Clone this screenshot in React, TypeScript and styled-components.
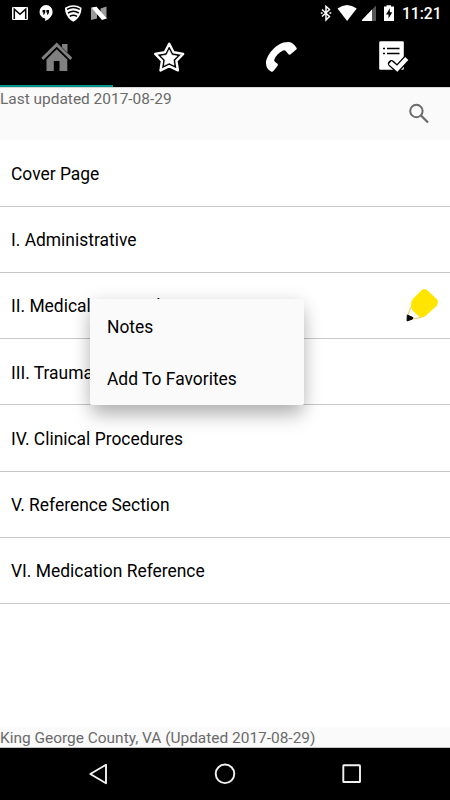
import React from "react";
import styled, { createGlobalStyle } from "styled-components";

const GlobalStyle = createGlobalStyle`
  *, *::before, *::after { box-sizing: border-box; }
  body { margin: 0; background: #fff; }
  svg { display: block; flex: none; }
`;

const Screen = styled.div`
  position: relative;
  display: flex;
  flex-direction: column;
  width: 450px;
  height: 800px;
  overflow: hidden;
  background: #fff;
  color: #000;
  font-family: Roboto, "Liberation Sans", sans-serif;
`;

const StatusBar = styled.header`
  display: flex;
  justify-content: space-between;
  flex: none;
  height: 27px;
  padding: 4px 9px 0 11px;
  background: #000;
  color: #fff;
`;

const StatusGroup = styled.div<{ $gap: number }>`
  display: flex;
  align-items: flex-start;
  gap: ${(p) => p.$gap}px;
`;

const Clock = styled.span`
  width: 39px;
  margin-top: 1px;
  margin-left: 2px;
  font-size: 15.6px;
  font-weight: 500;
  line-height: 19px;
  white-space: nowrap;
`;

const TabBar = styled.nav`
  display: grid;
  grid-template-columns: 113px 112px 112px 113px;
  flex: none;
  height: 60px;
  background: #000;
`;

const Tab = styled.button<{ $active?: boolean }>`
  display: flex;
  justify-content: center;
  padding: 13px 0 0;
  border: 0;
  border-bottom: 2px solid ${(p) => (p.$active ? "#009688" : "#000")};
  background: #000;
  color: ${(p) => (p.$active ? "#808080" : "#fff")};
`;

const InfoBar = styled.div`
  display: flex;
  justify-content: space-between;
  flex: none;
  height: 53px;
  padding-right: 20px;
  border-top: 1px solid #d8d8d8;
  background: #fafafa;
`;

const Caption = styled.span`
  font-size: 15.45px;
  line-height: 18px;
  color: #6a6a6a;
  white-space: nowrap;
`;

const InfoCaption = styled(Caption)`
  margin-top: 2px;
`;

const SearchButton = styled.button`
  align-self: flex-start;
  margin-top: 15px;
  padding: 0;
  border: 0;
  background: none;
  color: #6b6b6b;
`;

const List = styled.ul`
  flex: 1;
  margin: 0;
  padding: 0.7px 0 0;
  list-style: none;
`;

const Row = styled.li`
  display: flex;
  align-items: center;
  justify-content: space-between;
  height: 66.2px;
  padding: 2.4px 11px 0;
  border-bottom: 1px solid #c8c8c8;
  font-size: 17.43px;
  line-height: 21px;
  white-space: nowrap;
`;

const NoteMarker = styled.span`
  margin-bottom: 4px;
`;

const Footer = styled.footer`
  flex: none;
  height: 21px;
  padding-top: 1px;
  overflow: hidden;
  border-bottom: 1px solid #c4c4c4;
  background: #fafafa;
  line-height: 20px;
`;

const NavBar = styled.nav`
  display: grid;
  grid-template-columns: 162px 126px 162px;
  justify-items: center;
  flex: none;
  height: 52px;
  padding-top: 14px;
  background: #000;
  color: #f2f2f2;
`;

const NavBack = styled.span`
  margin-left: 34px;
`;

const NavRecent = styled.span`
  margin-right: 34px;
`;

const ContextMenu = styled.div`
  position: absolute;
  top: 299px;
  left: 90px;
  width: 214px;
  height: 105.5px;
  padding-top: 1.6px;
  border-radius: 2px;
  background: #fafafa;
  box-shadow: 0 12px 18px -2px rgba(0, 0, 0, 0.25), 0 2px 18px rgba(0, 0, 0, 0.12);
`;

const MenuItem = styled.div`
  height: 52px;
  padding-left: 17px;
  font-size: 17.43px;
  line-height: 53px;
`;

const GmailIcon = () => (
  <svg width="18" height="18" viewBox="11 4 18 18">
    <rect x="12" y="7" width="16" height="13" rx="1" fill="#fff" />
    <path d="M14.3 19V9.2L20 14.2L25.7 9.2V19" fill="none" stroke="#000" strokeWidth="1.5" />
  </svg>
);

const HangoutsIcon = () => (
  <svg width="18" height="18" viewBox="37 4 18 18">
    <path d="M46 5a6.8 6.8 0 0 0-.8 13.5V21c4-1.700 7.400-5 7.400-9.200A6.700 6.700 0 0 0 46 5Z" fill="#fff" />
    <path d="M42.600 10h2.600v2.500l-1 2H43l.6-2h-1zM46.400 10H49v2.500l-1 2h-1.200l.6-2h-1z" fill="#000" />
  </svg>
);

const ShieldIcon = () => (
  <svg width="18" height="18" viewBox="63 4 18 18">
    <path d="M64 7.700Q72.300 3 80.500 7.700C80.500 14.500 77 19 72.300 21.700C67.500 19 64 14.500 64 7.700Z" fill="#fff" />
    <g fill="none" stroke="#000" strokeWidth="1.500">
      <path d="M66 9.400Q72.300 5.700 78.800 9.400" />
      <path d="M67 13Q72.300 9.700 77.800 13" />
      <path d="M68.800 16.300Q72.300 14 76 16.300" />
    </g>
  </svg>
);

const NougatIcon = () => (
  <svg width="18" height="18" viewBox="90 4 18 18">
    <path d="M91 7.500L97 12V18.500L91 20ZM106.500 6.500V19L100.500 14V8.500Z" fill="#999" />
    <path d="M91.300 7.500L96.500 6.800L106.800 18.500L102 20Z" fill="#fff" />
  </svg>
);

const BluetoothIcon = () => (
  <svg width="12" height="18" viewBox="320 4 12 18">
    <path d="M322 9.500L329.500 16.500L326 20V6.500L329.500 9.500L322 16.500" fill="none" stroke="#fff" strokeWidth="1.500" />
    <path d="M320.800 12.200h1.800v1.600h-1.800zM329.500 12.200h1.800v1.600h-1.800z" fill="#fff" />
  </svg>
);

const WifiIcon = () => (
  <svg width="20" height="18" viewBox="338 4 20 18">
    <path d="M338.500 8.500Q348 1.500 357.700 8.500L348.100 21Z" fill="#fff" />
  </svg>
);

const SignalIcon = () => (
  <svg width="16" height="18" viewBox="361 4 16 18">
    <path d="M360 21L375 5.500V21Z" fill="#555" />
    <path d="M360 21L371 9.600V21Z" fill="#fff" />
  </svg>
);

const BatteryIcon = () => (
  <svg width="12" height="18" viewBox="383 4 12 18">
    <path d="M386.500 5.200h4.500v1.400h3V21h-10V6.600h2.500z" fill="#fff" />
    <path d="M389.800 8.200L386 14.500h2.500v4l3.800-6.300h-2.500z" fill="#000" />
  </svg>
);

const HomeIcon = () => (
  <svg width="34" height="34" viewBox="39.500 40 34 34" fill="currentColor">
    <path d="M56.200 42.600L61.500 47.700V44H67V53L71.800 57.800L69.800 60L56.200 46.800L42.800 60L40.800 57.800Z" />
    <path d="M56.200 49.200L66.800 59.500V71H59V61H53.300V71H46V59.500Z" />
    <path d="M61.300 47.500L67.300 53.300" stroke="#000" strokeWidth=".6" />
  </svg>
);

const StarIcon = () => (
  <svg width="34" height="34" viewBox="151.500 40 34 34" strokeLinejoin="round">
    <path d="M168.700 43.700L173.100 52.300L182.700 53.900L175.900 60.800L177.400 70.400L168.700 66.100L160 70.400L161.500 60.800L154.700 53.900L164.300 52.300Z" fill="#000" stroke="#fff" strokeWidth="2.400" />
    <path d="M168.700 49.800L171.300 55L176.700 56L172.800 59.900L173.600 65.300L168.700 62.900L163.800 65.300L164.600 59.900L160.700 56L166.100 55Z" fill="#fff" stroke="#fff" strokeWidth=".6" />
  </svg>
);

const PhoneIcon = () => (
  <svg width="34" height="34" viewBox="264 40 34 34">
    <path d="M266 63C266 56 276 42 288 42Q290.500 42 292 43Q295 45 296.700 48Q297 48.800 296.300 49.500L290 54.700Q289 55 288.300 54L285.500 50.800Q284.500 50 283 50.600C279 52.500 275.500 56 274.200 60Q274 61.200 275.200 62L277.500 63.800Q278.300 64.500 277.600 65.700L273.500 71.100Q272.500 72.200 271 71.600Q266 69 266 63Z" fill="#fff" />
  </svg>
);

const ChecklistIcon = () => (
  <svg width="34" height="34" viewBox="377 40 34 34">
    <path d="M380.500 41.200H402.500Q403.800 41.200 403.800 42.500V68.500Q403.800 69.800 402.500 69.800H380.500Q379.200 69.800 379.200 68.500V42.500Q379.200 41.200 380.500 41.200Z" fill="#fff" />
    <path d="M383 48.500h2M387 48.500h12.500M383 53.500h2M387 53.500h12.500" stroke="#000" strokeWidth="1.600" />
    <path d="M391.500 63.700L397.200 68.800L405.500 59.800" fill="none" stroke="#000" strokeWidth="7" strokeLinecap="round" />
    <path d="M391.800 64L397.200 68.700L405.300 60" fill="none" stroke="#fff" strokeWidth="4.300" strokeLinecap="square" />
  </svg>
);

const SearchIcon = () => (
  <svg width="22" height="22" viewBox="408 103 22 22" fill="none" stroke="currentColor" strokeWidth="2">
    <circle cx="416.400" cy="111" r="6.200" />
    <path d="M421 115.500L428 122.500" strokeWidth="2.300" />
  </svg>
);

const PencilIcon = () => (
  <svg width="34" height="36" viewBox="405 287 34 36">
    <path d="M411.500 301L407 317L409 321L427 316Z" fill="#fffdf5" />
    <path d="M410.600 307.500L407.500 316.500L412 319L421 317.400" fill="none" stroke="#e7c664" strokeWidth="1" />
    <path d="M411.100 303.500Q411.500 300.500 413.200 298.600L421.800 290Q424 288.300 426.500 289.500L436.700 299Q438.200 300.500 437.900 302.500L437 305.500L425.500 316Q423 317.800 420.500 317.300Q412.500 311.500 411 307.500Z" fill="#ffe500" />
    <path d="M407.300 315L413 317.600L412.200 319.200L407 320.900Z" fill="#090909" stroke="#090909" strokeLinejoin="round" />
  </svg>
);

const BackIcon = () => (
  <svg width="22" height="24" viewBox="87 762 22 24">
    <path d="M106 764.700V783.300L90.300 774Z" fill="none" stroke="currentColor" strokeWidth="1.900" strokeLinejoin="round" />
  </svg>
);

const CircleIcon = () => (
  <svg width="24" height="24" viewBox="213 762 24 24">
    <circle cx="225" cy="773.800" r="9.300" fill="none" stroke="currentColor" strokeWidth="1.900" />
  </svg>
);

const SquareIcon = () => (
  <svg width="22" height="24" viewBox="341 762 22 24">
    <rect x="343.300" y="765.300" width="16.700" height="16.700" rx=".6" fill="none" stroke="currentColor" strokeWidth="1.900" />
  </svg>
);

const sections = [
  { title: "Cover Page" },
  { title: "I. Administrative" },
  { title: "II. Medical Protocols", noted: true },
  { title: "III. Trauma" },
  { title: "IV. Clinical Procedures" },
  { title: "V. Reference Section" },
  { title: "VI. Medication Reference" },
];

export default function App() {
  return (
    <>
      <GlobalStyle />
      <Screen>
        <StatusBar>
          <StatusGroup $gap={8.3}>
            <GmailIcon />
            <HangoutsIcon />
            <ShieldIcon />
            <NougatIcon />
          </StatusGroup>
          <StatusGroup $gap={5}>
            <BluetoothIcon />
            <WifiIcon />
            <SignalIcon />
            <BatteryIcon />
            <Clock>11:21</Clock>
          </StatusGroup>
        </StatusBar>
        <TabBar>
          <Tab $active aria-label="Home"><HomeIcon /></Tab>
          <Tab aria-label="Favorites"><StarIcon /></Tab>
          <Tab aria-label="Phone"><PhoneIcon /></Tab>
          <Tab aria-label="Checklist"><ChecklistIcon /></Tab>
        </TabBar>
        <InfoBar>
          <InfoCaption>Last updated 2017-08-29</InfoCaption>
          <SearchButton aria-label="Search"><SearchIcon /></SearchButton>
        </InfoBar>
        <List>
          {sections.map((section) => (
            <Row key={section.title}>
              {section.title}
              {section.noted && <NoteMarker><PencilIcon /></NoteMarker>}
            </Row>
          ))}
        </List>
        <Footer>
          <Caption>King George County, VA (Updated 2017-08-29)</Caption>
        </Footer>
        <NavBar>
          <NavBack><BackIcon /></NavBack>
          <CircleIcon />
          <NavRecent><SquareIcon /></NavRecent>
        </NavBar>
        <ContextMenu>
          <MenuItem>Notes</MenuItem>
          <MenuItem>Add To Favorites</MenuItem>
        </ContextMenu>
      </Screen>
    </>
  );
}
